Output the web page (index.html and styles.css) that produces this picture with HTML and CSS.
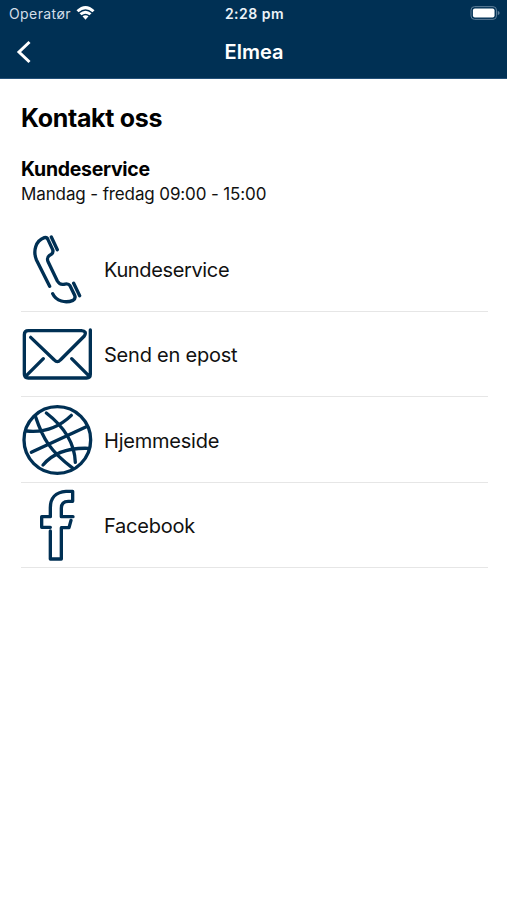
FILE: index.html
```html
<!DOCTYPE html>
<html lang="nb">
<head>
<meta charset="utf-8">
<meta name="viewport" content="width=device-width, initial-scale=1">
<title>Elmea</title>
<link rel="stylesheet" href="styles.css">
</head>
<body>
<header class="header">
  <div class="status">
    <div class="carrier"><span class="carrier-name">Operatør</span>
      <svg class="wifi" viewBox="0 0 54 42"><path d="M0 13Q27-13 54 13L48 19Q27 0 6 19Z"/><path d="M9 22Q27 6 45 22L39 28Q27 18 15 28Z"/><path d="M18 31Q27 24 36 31L27 41Z"/></svg>
    </div>
    <span class="clock">2:28 pm</span>
    <svg class="battery" viewBox="0 0 92 44"><rect class="shell" x="2" y="2" width="80" height="40" rx="11"/><rect class="charge" x="8" y="8" width="68" height="28" rx="6"/><path class="tip" d="M86 15q6 2 6 7t-6 7z"/></svg>
  </div>
  <nav class="nav">
    <svg class="back" viewBox="0 0 16 24"><path d="M13.5 2L3 12L13.5 22"/></svg>
    <h1 class="title">Elmea</h1>
  </nav>
</header>
<main class="content">
  <h2 class="heading">Kontakt oss</h2>
  <h3 class="subheading">Kundeservice</h3>
  <p class="hours">Mandag - fredag 09:00 - 15:00</p>
  <ul class="list">
    <li class="row">
      <svg class="icon" viewBox="18 24 216 216"><path d="M104 184L64 104C54 78 61 48 88 38Q96 36 99 44L113 74Q116 82 109 88C96 94 95 101 100 112L127 168Q134 180 146 178Q160 174 165 182L179 211Q183 220 174 226C152 235 123 229 113 206M109 36L127 74M176 175L194 212"/></svg>
      <span class="label label-tight">Kundeservice</span>
    </li>
    <li class="row">
      <svg class="icon" viewBox="18 9 216 216"><path d="M226 45V178Q226 189 215 189H40Q28 189 28 177V59Q28 47 40 47H199Q217 48 208 63L136 135Q127 145 118 135L47 67M85 131L31 185M170 131L224 185"/></svg>
      <span class="label">Send en epost</span>
    </li>
    <li class="row">
      <svg class="icon" viewBox="18 18 216 216"><circle cx="127" cy="126" r="100"/><path d="M94 45Q178 110 181 193M62 57C83 120 105 160 174 211M35 99Q112 107 169 52M49 163L214 86M84 201C115 164 160 149 220 151"/></svg>
      <span class="label">Hjemmeside</span>
    </li>
    <li class="row">
      <svg class="icon" viewBox="18 22 216 216"><path d="M106 148V232H139V138H162L168 116M174 105H139V80Q139 59 160 59H173V29H153C121 31 106 51 106 78V105H80V137H106"/></svg>
      <span class="label">Facebook</span>
    </li>
  </ul>
</main>
</body>
</html>
```
FILE: styles.css
```css
* { box-sizing: border-box; }
body { margin: 0; background: #fff; color: #111; font-family: Inter, "Liberation Sans", sans-serif; }
h1, h2, h3, p, ul { margin: 0; padding: 0; }
svg { display: block; flex: none; }
.header { height: 79px; background: #003054; color: #fff; border-bottom: 1px solid #245078; }
.status { height: 27px; padding: 0 7px 0 9px; display: grid; grid-template-columns: 1fr auto 1fr; align-items: center; }
.carrier { display: flex; align-items: center; gap: 5px; }
.carrier-name { font-size: 14px; line-height: 27px; color: #d3dee8; letter-spacing: .4px; }
.wifi { width: 19px; height: 14px; margin-top: -2px; fill: #fff; }
.clock { font-size: 14px; line-height: 27px; font-weight: 600; color: #edf3f8; letter-spacing: .5px; }
.battery { width: 30px; height: 14px; margin-top: -1px; justify-self: end; }
.shell { fill: none; stroke: #64839d; stroke-width: 3; }
.charge { fill: #fff; }
.tip { fill: #64839d; }
.nav { height: 51px; padding: 0 15px 0 16px; display: grid; grid-template-columns: 1fr auto 1fr; align-items: center; }
.back { width: 16px; height: 24px; margin-top: -2px; fill: none; stroke: #fff; stroke-width: 3; }
.title { margin-top: -1px; font-size: 20px; line-height: 24px; font-weight: 600; }
.content { padding: 22px 19px 0 21px; }
.heading { font-size: 25px; line-height: 34px; font-weight: 700; color: #000; letter-spacing: -.32px; }
.subheading { margin-top: 22px; font-size: 19.5px; line-height: 24px; font-weight: 700; color: #000; letter-spacing: -.3px; }
.hours { font-size: 17px; line-height: 26px; letter-spacing: -.12px; }
.list { list-style: none; margin-top: 19.25px; }
.row { height: 85.5px; display: flex; align-items: center; gap: 11px; border-bottom: 1px solid #e6e6e6; }
.icon { width: 72px; height: 72px; fill: none; stroke: #003054; stroke-width: 10; stroke-linecap: round; stroke-linejoin: round; }
.label { margin-top: 2px; font-size: 20px; line-height: 26px; letter-spacing: -.22px; }
.label-tight { letter-spacing: -.36px; }
```
